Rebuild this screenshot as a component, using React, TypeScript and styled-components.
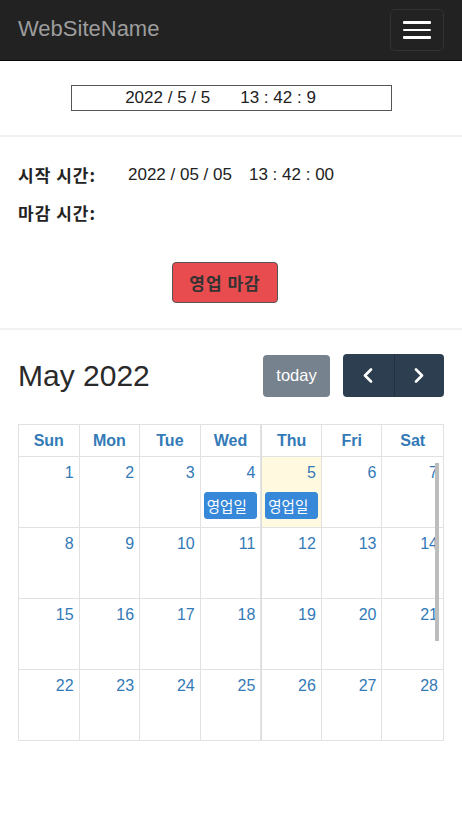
import React from "react";
import styled, { createGlobalStyle } from "styled-components";

const GlobalStyle = createGlobalStyle`
  html, body { margin: 0; padding: 0; background: #fff; }
  body {
    font-family: "Liberation Sans", Arial, "Noto Sans CJK KR", sans-serif;
    color: #333;
  }
  * { box-sizing: border-box; }
`;

const Navbar = styled.nav`
  height: 61px;
  background: #222;
  border-bottom: 1px solid #080808;
  display: flex;
  align-items: center;
  justify-content: space-between;
  padding: 0 18px;
`;

const Brand = styled.div`
  font-size: 22px;
  color: #9d9d9d;
  line-height: 1;
  margin-top: -2px;
`;

const Toggle = styled.button`
  width: 54px;
  height: 42px;
  border: 1px solid #333;
  border-radius: 5px;
  background: transparent;
  display: flex;
  flex-direction: column;
  align-items: center;
  justify-content: center;
  gap: 5px;
  padding: 0;
`;

const Bar = styled.span`
  display: block;
  width: 28px;
  height: 2.5px;
  background: #fff;
  border-radius: 1px;
`;

const ClockSection = styled.section`
  padding: 24px 0 24px;
  border-bottom: 2px solid #f2f2f2;
`;

const ClockBox = styled.div`
  width: 321px;
  height: 26px;
  margin: 0 auto;
  border: 1px solid #555;
  display: flex;
  align-items: center;
  justify-content: center;
  gap: 30px;
  font-size: 17px;
  color: #222;
  padding-right: 21px;
`;

const InfoSection = styled.section`
  padding: 25px 18px 25px;
  border-bottom: 2px solid #f2f2f2;
`;

const InfoRow = styled.div`
  display: grid;
  grid-template-columns: 110px 1fr;
  height: 24px;
  align-items: center;
  font-size: 17px;
  margin-bottom: 14px;
`;

const Label = styled.span`
  font-weight: bold;
  color: #222;
  font-family: "Noto Sans CJK KR", "Liberation Sans", sans-serif;
  font-size: 17px;
  letter-spacing: 1px;
`;

const Value = styled.span`
  display: flex;
  gap: 17px;
  color: #222;
`;

const ButtonRow = styled.div`
  display: flex;
  justify-content: center;
  padding-top: 24px;
  padding-right: 12px;
`;

const CloseButton = styled.button`
  width: 106px;
  height: 41px;
  background: #e94c4f;
  border: 1px solid #555;
  border-radius: 4px;
  color: #333;
  font-family: "Noto Sans CJK KR", sans-serif;
  font-size: 17px;
  font-weight: bold;
  letter-spacing: 1px;
  padding: 0;
`;

const CalendarSection = styled.section`
  padding: 24px 18px 40px;
`;

const Toolbar = styled.div`
  display: flex;
  align-items: center;
  justify-content: space-between;
  height: 43px;
  margin-bottom: 27px;
`;

const Title = styled.h2`
  margin: 0;
  font-size: 30px;
  font-weight: normal;
  color: #2a2a2a;
`;

const ToolGroup = styled.div`
  display: flex;
  align-items: center;
  gap: 13px;
`;

const TodayButton = styled.button`
  width: 67px;
  height: 42px;
  background: #76828d;
  border: none;
  border-radius: 4px;
  color: #fff;
  font-family: "Liberation Sans", Arial, sans-serif;
  font-size: 16.5px;
  padding: 0;
`;

const NavGroup = styled.div`
  display: flex;
  height: 43px;
  border-radius: 4px;
  overflow: hidden;
`;

const NavButton = styled.button<{ $first?: boolean }>`
  width: 50.5px;
  height: 43px;
  background: #2c3e50;
  border: none;
  border-left: ${(p) => (p.$first ? "none" : "1px solid #24323f")};
  display: flex;
  align-items: center;
  justify-content: center;
  padding: 0;
`;

const Grid = styled.div`
  position: relative;
  border: 1px solid #e2e2e2;
  display: grid;
  grid-template-columns: repeat(7, 1fr);
`;

const HeadCell = styled.div<{ $last?: boolean; $thick?: boolean }>`
  height: 32px;
  display: flex;
  align-items: center;
  justify-content: center;
  font-weight: bold;
  font-size: 16px;
  color: #337ab7;
  border-bottom: 1px solid #e2e2e2;
  border-right: ${(p) => (p.$last ? "none" : "1px solid #e2e2e2")};
  border-left: ${(p) => (p.$thick ? "1px solid #dcdcdc" : "none")};
`;

const DayCell = styled.div<{ $last?: boolean; $today?: boolean; $bottom?: boolean; $thick?: boolean }>`
  height: ${(p) => (p.$bottom ? "70px" : "71px")};
  padding: 4px 0 0;
  background: ${(p) => (p.$today ? "#fff9df" : "transparent")};
  border-bottom: ${(p) => (p.$bottom ? "none" : "1px solid #e2e2e2")};
  border-right: ${(p) => (p.$last ? "none" : "1px solid #e2e2e2")};
  border-left: ${(p) => (p.$thick ? "1px solid #dcdcdc" : "none")};
  display: flex;
  flex-direction: column;
`;

const DayNum = styled.div`
  height: 24px;
  line-height: 24px;
  text-align: right;
  padding-right: 5px;
  font-size: 16px;
  color: #337ab7;
`;

const EventChip = styled.div`
  margin: 7px 3px 0 3px;
  height: 27px;
  line-height: 25px;
  background: #3788d8;
  border: 1px solid #3788d8;
  border-radius: 3px;
  color: #fff;
  font-family: "Noto Sans CJK KR", sans-serif;
  font-size: 14.5px;
  padding-left: 2px;
  white-space: nowrap;
  overflow: hidden;
`;

const ScrollThumb = styled.div`
  position: absolute;
  right: 4px;
  top: 38px;
  width: 4px;
  height: 178px;
  background: #bdbdbd;
`;

const Chevron = ({ dir }: { dir: "left" | "right" }) => (
  <svg width="12" height="15" viewBox="0 0 12 15">
    <polyline
      points={dir === "left" ? "9,1.5 3,7.5 9,13.5" : "3,1.5 9,7.5 3,13.5"}
      fill="none"
      stroke="#fff"
      strokeWidth="2.6"
      strokeLinecap="round"
      strokeLinejoin="round"
    />
  </svg>
);

const days = ["Sun", "Mon", "Tue", "Wed", "Thu", "Fri", "Sat"];
const weeks = [
  [1, 2, 3, 4, 5, 6, 7],
  [8, 9, 10, 11, 12, 13, 14],
  [15, 16, 17, 18, 19, 20, 21],
  [22, 23, 24, 25, 26, 27, 28],
];
const eventDays = [4, 5];

export default function App() {
  return (
    <>
      <GlobalStyle />
      <Navbar>
        <Brand>WebSiteName</Brand>
        <Toggle aria-label="menu">
          <Bar />
          <Bar />
          <Bar />
        </Toggle>
      </Navbar>

      <ClockSection>
        <ClockBox>
          <span>2022 / 5 / 5</span>
          <span>13 : 42 : 9</span>
        </ClockBox>
      </ClockSection>

      <InfoSection>
        <InfoRow>
          <Label>시작 시간:</Label>
          <Value>
            <span>2022 / 05 / 05</span>
            <span>13 : 42 : 00</span>
          </Value>
        </InfoRow>
        <InfoRow>
          <Label>마감 시간:</Label>
          <Value />
        </InfoRow>
        <ButtonRow>
          <CloseButton>영업 마감</CloseButton>
        </ButtonRow>
      </InfoSection>

      <CalendarSection>
        <Toolbar>
          <Title>May 2022</Title>
          <ToolGroup>
            <TodayButton>today</TodayButton>
            <NavGroup>
              <NavButton $first aria-label="prev">
                <Chevron dir="left" />
              </NavButton>
              <NavButton aria-label="next">
                <Chevron dir="right" />
              </NavButton>
            </NavGroup>
          </ToolGroup>
        </Toolbar>

        <Grid>
          {days.map((d, i) => (
            <HeadCell key={d} $last={i === 6} $thick={i === 4}>
              {d}
            </HeadCell>
          ))}
          {weeks.map((w, wi) =>
            w.map((n, i) => (
              <DayCell
                key={n}
                $last={i === 6}
                $today={n === 5}
                $bottom={wi === weeks.length - 1}
                $thick={i === 4}
              >
                <DayNum>{n}</DayNum>
                {eventDays.includes(n) && <EventChip>영업일</EventChip>}
              </DayCell>
            ))
          )}
          <ScrollThumb />
        </Grid>
      </CalendarSection>
    </>
  );
}
